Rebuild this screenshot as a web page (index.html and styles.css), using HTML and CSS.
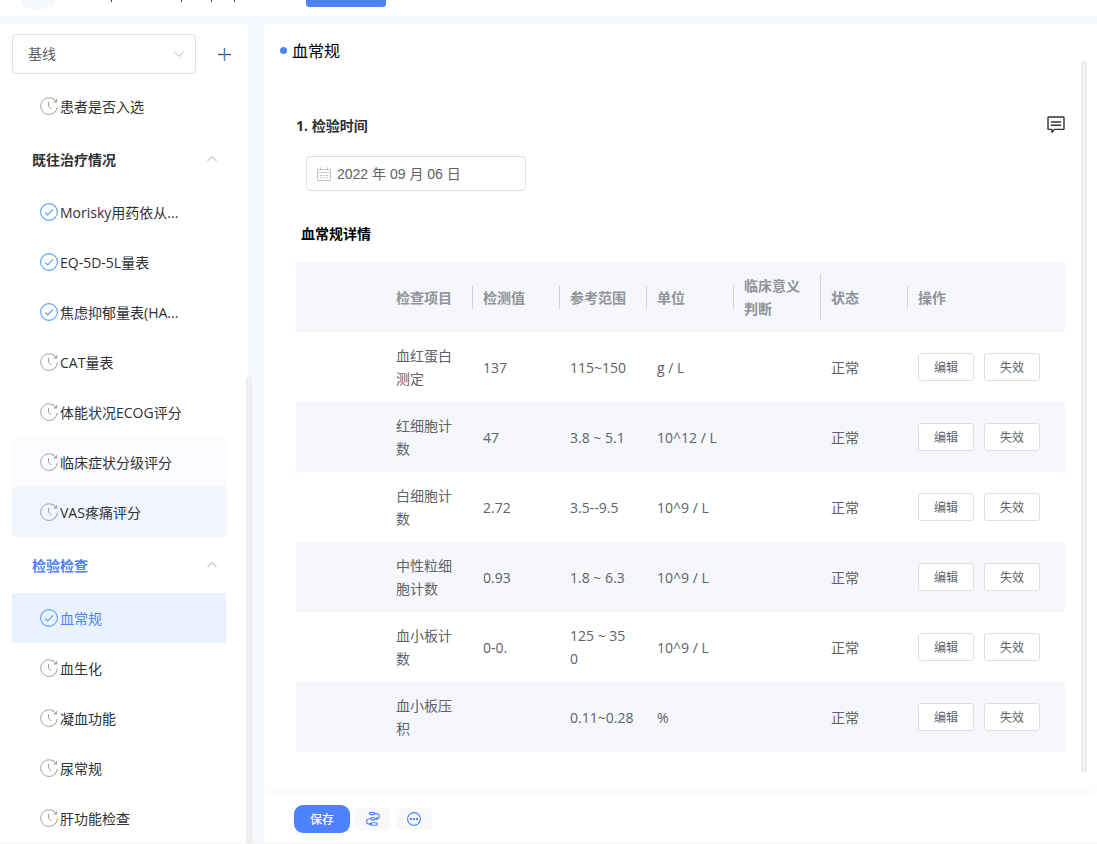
FILE: index.html
```html
<!DOCTYPE html>
<html lang="zh-CN">
<head>
<meta charset="utf-8">
<title>血常规</title>
<link rel="stylesheet" href="styles.css">
</head>
<body>
<svg class="sprite" aria-hidden="true">
  <symbol id="clock" viewBox="0 0 18 18">
    <path d="M15.200 3.600A8.300 8.300 0 1 0 17.300 9.800M14 2.500a8.400 8.400 0 0 0-1.600-1" fill="none" stroke="currentColor"/>
    <path d="M16.900 11.500l-.6 1.700M15.800 14l-1.200 1.500" fill="none" stroke="currentColor"/>
    <path d="M17.200 1.600v3.900h-3.900z" fill="currentColor"/>
    <path d="M8.500 5v4l2.500 3" fill="none" stroke="currentColor"/>
  </symbol>
  <symbol id="check" viewBox="0 0 18 18">
    <circle cx="9" cy="9" r="8.4" fill="none" stroke="currentColor" stroke-width="1.1"/>
    <path d="M5.2 9.5l2.6 2.4L13 6.4" fill="none" stroke="currentColor" stroke-width="1.1"/>
  </symbol>
  <symbol id="up" viewBox="0 0 12 12">
    <path d="M1.5 8L6 3.500 10.500 8" fill="none" stroke="currentColor"/>
  </symbol>
</svg>

<header class="topbar">
  <span class="avatar"></span>
  <svg class="marks" width="128" height="2" viewBox="0 0 128 2" aria-hidden="true"><path d="M1.500 0v2M71.500 0v2M101.500 0v2M124.500 0v2" stroke="#4a4048" fill="none"/></svg>
  <span class="tab"></span>
</header>

<div class="layout">
  <aside class="sidebar">
    <div class="visit">
      <div class="select-wrap">
        <select aria-label="访视"><option>基线</option></select>
        <svg class="caret" viewBox="0 0 12 12"><path d="M1 3.500L6 8.500 11 3.500" fill="none" stroke="currentColor"/></svg>
      </div>
      <button class="add" aria-label="新增"><svg width="14" height="14" viewBox="0 0 14 14"><path d="M1 7.500h13" stroke="#4f5864" stroke-width="1.400"/><path d="M7.500 1v13" stroke="#3d87c4" stroke-width="1.400"/></svg></button>
    </div>
    <nav class="menu">
      <a class="item" href="#"><svg class="ico"><use href="#clock"/></svg>患者是否入选</a>
      <button class="group">既往治疗情况<svg class="up"><use href="#up"/></svg></button>
      <a class="item done" href="#"><svg class="ico"><use href="#check"/></svg>Morisky用药依从...</a>
      <a class="item done" href="#"><svg class="ico"><use href="#check"/></svg>EQ-5D-5L量表</a>
      <a class="item done" href="#"><svg class="ico"><use href="#check"/></svg>焦虑抑郁量表(HA...</a>
      <a class="item" href="#"><svg class="ico"><use href="#clock"/></svg>CAT量表</a>
      <a class="item" href="#"><svg class="ico"><use href="#clock"/></svg>体能状况ECOG评分</a>
      <a class="item fading" href="#"><svg class="ico"><use href="#clock"/></svg>临床症状分级评分</a>
      <a class="item hovered" href="#"><svg class="ico"><use href="#clock"/></svg>VAS疼痛评分</a>
      <button class="group current">检验检查<svg class="up"><use href="#up"/></svg></button>
      <a class="item done active" href="#"><svg class="ico"><use href="#check"/></svg>血常规</a>
      <a class="item" href="#"><svg class="ico"><use href="#clock"/></svg>血生化</a>
      <a class="item" href="#"><svg class="ico"><use href="#clock"/></svg>凝血功能</a>
      <a class="item" href="#"><svg class="ico"><use href="#clock"/></svg>尿常规</a>
      <a class="item" href="#"><svg class="ico"><use href="#clock"/></svg>肝功能检查</a>
    </nav>
    <span class="scroll side-scroll"></span>
  </aside>

  <main class="panel">
    <h1 class="title">血常规</h1>
    <div class="content">
      <div class="question">
        <label for="date">1. 检验时间</label>
        <button class="note" aria-label="备注"><svg width="18" height="18" viewBox="0 0 18 18" fill="none" stroke="#303133" stroke-width="1.400" stroke-linejoin="round"><path d="M1.700 1h14.600q.7 0 .7.7v11q0 .7-.7.7H7.500L5 16.200 4.800 13.400H1.700Q1 13.400 1 12.700v-11Q1 1 1.700 1zM4 6h10M4 9.200h10"/></svg></button>
      </div>
      <div class="date">
        <svg width="14" height="14" viewBox="0 0 14 14" fill="none" stroke="#c0c4cc"><path d="M.5 2.500h13v11H.5zM.5 5.500h13M3.500 .5v3M10.500 .5v3"/><path d="M3 8.500h8M3 10.500h8" stroke-dasharray="2 1"/></svg>
        <input id="date" type="text" value="2022 年 09 月 06 日">
      </div>
      <h2 class="subtitle">血常规详情</h2>
      <table class="grid">
        <colgroup><col class="c-first"><col><col><col><col><col><col><col class="c-last"></colgroup>
        <thead><tr><th></th><th><div>检查项目</div></th><th><div>检测值</div></th><th><div>参考范围</div></th><th><div>单位</div></th><th><div>临床意义判断</div></th><th><div>状态</div></th><th><div>操作</div></th></tr></thead>
        <tbody>
          <tr><td></td><td>血红蛋白测定</td><td>137</td><td>115~150</td><td>g / L</td><td></td><td>正常</td><td><div class="ops"><button>编辑</button><button>失效</button></div></td></tr>
          <tr><td></td><td>红细胞计数</td><td>47</td><td>3.8 ~ 5.1</td><td>10^12 / L</td><td></td><td>正常</td><td><div class="ops"><button>编辑</button><button>失效</button></div></td></tr>
          <tr><td></td><td>白细胞计数</td><td>2.72</td><td>3.5--9.5</td><td>10^9 / L</td><td></td><td>正常</td><td><div class="ops"><button>编辑</button><button>失效</button></div></td></tr>
          <tr><td></td><td>中性粒细胞计数</td><td>0.93</td><td>1.8 ~ 6.3</td><td>10^9 / L</td><td></td><td>正常</td><td><div class="ops"><button>编辑</button><button>失效</button></div></td></tr>
          <tr><td></td><td>血小板计数</td><td>0-0.</td><td>125 ~ 35<br>0</td><td>10^9 / L</td><td></td><td>正常</td><td><div class="ops"><button>编辑</button><button>失效</button></div></td></tr>
          <tr><td></td><td>血小板压积</td><td></td><td>0.11~0.28</td><td>%</td><td></td><td>正常</td><td><div class="ops"><button>编辑</button><button>失效</button></div></td></tr>
        </tbody>
      </table>
    </div>
    <footer class="actions">
      <button class="save">保存</button>
      <button class="tool" aria-label="流程"><svg width="14" height="14" viewBox="0 0 14 14" fill="none" stroke="#4e82fd" stroke-width="1.100"><rect x="3.500" y=".6" width="5" height="2" rx=".5"/><rect x="5" y="5.700" width="4" height="2.200" rx=".5"/><rect x="5.500" y="10.800" width="5.500" height="2.400" rx=".5"/><path d="M8.500 1.600h2.200a2.600 2.600 0 0 1 0 5.200H9M5 6.800H3.200a2.600 2.600 0 0 0 0 5.200h2.300M11.500 5.400L10 6.800l1.500 1.400M3.500 10.600L5 12l-1.500 1.400"/></svg></button>
      <button class="tool" aria-label="更多"><svg width="14" height="14" viewBox="0 0 14 14"><circle cx="7" cy="7" r="6.400" fill="none" stroke="#4e82fd" stroke-width="1.100"/><path d="M3 6h2v2H3zM6 6h2v2H6zM9 6h2v2H9z" fill="#4e82fd"/></svg></button>
    </footer>
    <span class="scroll main-scroll"></span>
  </main>
</div>
</body>
</html>
```
FILE: styles.css
```css
* { box-sizing: border-box; }

body {
  margin: 0;
  height: 100vh;
  display: flex;
  flex-direction: column;
  overflow: hidden;
  background: #f6f9ff;
  color: #303133;
  font-family: "Open Sans", "Noto Sans CJK SC", sans-serif;
  font-size: 14px;
}

button { font-family: inherit; cursor: pointer; padding: 0; }
a { color: inherit; text-decoration: none; }
.sprite { position: absolute; width: 0; height: 0; }

.topbar {
  display: flex;
  align-items: flex-start;
  height: 16px;
  padding-left: 21px;
  background: #fff;
}
.avatar { width: 34px; height: 9px; border-radius: 0 0 17px 17px; background: #f5f8fe; }
.marks { margin-left: 55px; }
.tab { width: 80px; height: 7px; margin-left: 68px; border-radius: 0 0 3px 3px; background: #4e82fd; }

.layout {
  flex: 1;
  min-height: 0;
  display: flex;
  gap: 16px;
  padding-top: 8px;
  border-bottom: 1px solid #f5f5f6;
}

.sidebar {
  position: relative;
  width: 248px;
  flex: none;
  padding: 10px 22px 0 12px;
  background: #fff;
}
.visit { display: flex; align-items: center; margin-right: -22px; gap: 21px; margin-bottom: 7px; }
.select-wrap { position: relative; width: 184px; }
.select-wrap select {
  appearance: none;
  display: block;
  width: 100%;
  height: 40px;
  padding: 0 15px 2px;
  border: 1px solid #dcdfe6;
  border-radius: 4px;
  background: #fff;
  color: #606266;
  font: inherit;
}
.caret { position: absolute; right: 11px; top: 14px; width: 12px; height: 12px; color: #b4bccc; }
.add { display: flex; border: 0; background: none; }

.menu { display: flex; flex-direction: column; }
.item {
  display: flex;
  align-items: center;
  gap: 2px;
  height: 50px;
  padding-left: 28px;
  white-space: nowrap;
}
.ico { width: 18px; height: 18px; flex: none; color: #a3a3a3; }
.done .ico { color: #5aa2fb; }
.fading { background: #fafcff; }
.hovered { background: #f0f5ff; }
.active { background: #ebf2ff; color: #4e82fd; }
.group {
  display: flex;
  align-items: center;
  justify-content: space-between;
  height: 56px;
  padding: 0 8px 0 20px;
  border: 0;
  background: none;
  color: #303133;
  font-size: 14px;
  font-weight: 700;
}
.group.current { color: #4e82fd; }
.up { width: 12px; height: 12px; color: #a3a7af; }

.scroll {
  position: absolute;
  width: 6px;
  border-radius: 3px;
  background: #f1f1f1;
  box-shadow: inset 0 0 3px rgba(0, 0, 0, .08);
}
.side-scroll { top: 353px; right: -4px; bottom: 0; border-radius: 3px 3px 0 0; }
.main-scroll { top: 37px; right: 10px; bottom: 71px; }

.panel {
  position: relative;
  flex: 1;
  min-width: 0;
  display: flex;
  flex-direction: column;
  background: #fff;
}
.title {
  display: flex;
  align-items: center;
  gap: 5px;
  height: 52px;
  margin: 0;
  padding-left: 16px;
  color: #000;
  font-size: 16px;
  font-weight: 400;
}
.title::before { content: ""; width: 7px; height: 7px; border-radius: 50%; background: #4e82fd; }

.content { flex: 1; min-height: 0; overflow: hidden; padding: 34px 32px 0; }
.question { display: flex; align-items: center; justify-content: space-between; height: 30px; font-weight: 700; }
.note { display: flex; border: 0; background: none; }
.date {
  display: flex;
  align-items: center;
  gap: 6px;
  width: 220px;
  height: 35px;
  margin: 16px 0 0 10px;
  padding: 0 10px;
  border: 1px solid #dcdfe6;
  border-radius: 4px;
}
.date input {
  flex: 1;
  min-width: 0;
  padding: 0 0 2px;
  border: 0;
  outline: 0;
  background: none;
  color: #606266;
  font: 14px "Liberation Sans", "Noto Sans CJK SC", sans-serif;
}
.subtitle { margin: 32px 0 17px 5px; color: #000; font-size: 14px; line-height: 22px; font-weight: 700; }

.grid {
  width: 100%;
  table-layout: fixed;
  border-collapse: collapse;
  color: #606266;
  line-height: 23px;
  word-break: break-all;
}
.c-first { width: 90px; }
.c-last { width: 157px; }
.grid th { padding: 12px 0; background: #f5f7fb; color: #909399; text-align: left; font-weight: 700; }
.grid th div { padding: 0 10px; border-right: 1px solid #d3d3d3; }
.grid th:last-child div { border: 0; }
.grid td { height: 70px; padding: 12px 10px; }
.grid tbody tr:nth-child(even) { background: #f5f7fb; }
.ops { display: flex; gap: 10px; }
.ops button {
  width: 56px;
  height: 28px;
  border: 1px solid #dcdfe6;
  border-radius: 3px;
  background: #fff;
  color: #606266;
  font-size: 12px;
}

.actions {
  display: flex;
  align-items: center;
  gap: 5px;
  height: 49px;
  padding-left: 30px;
  box-shadow: 0 -4px 8px rgba(78, 130, 253, .04);
}
.save { width: 56px; height: 28px; border: 0; border-radius: 9px; background: #4e82fd; color: #fff; font-size: 12px; font-weight: 500; }
.tool { display: flex; align-items: center; justify-content: center; width: 36px; height: 22px; border: 0; border-radius: 4px; background: #f9f9f9; }
```
